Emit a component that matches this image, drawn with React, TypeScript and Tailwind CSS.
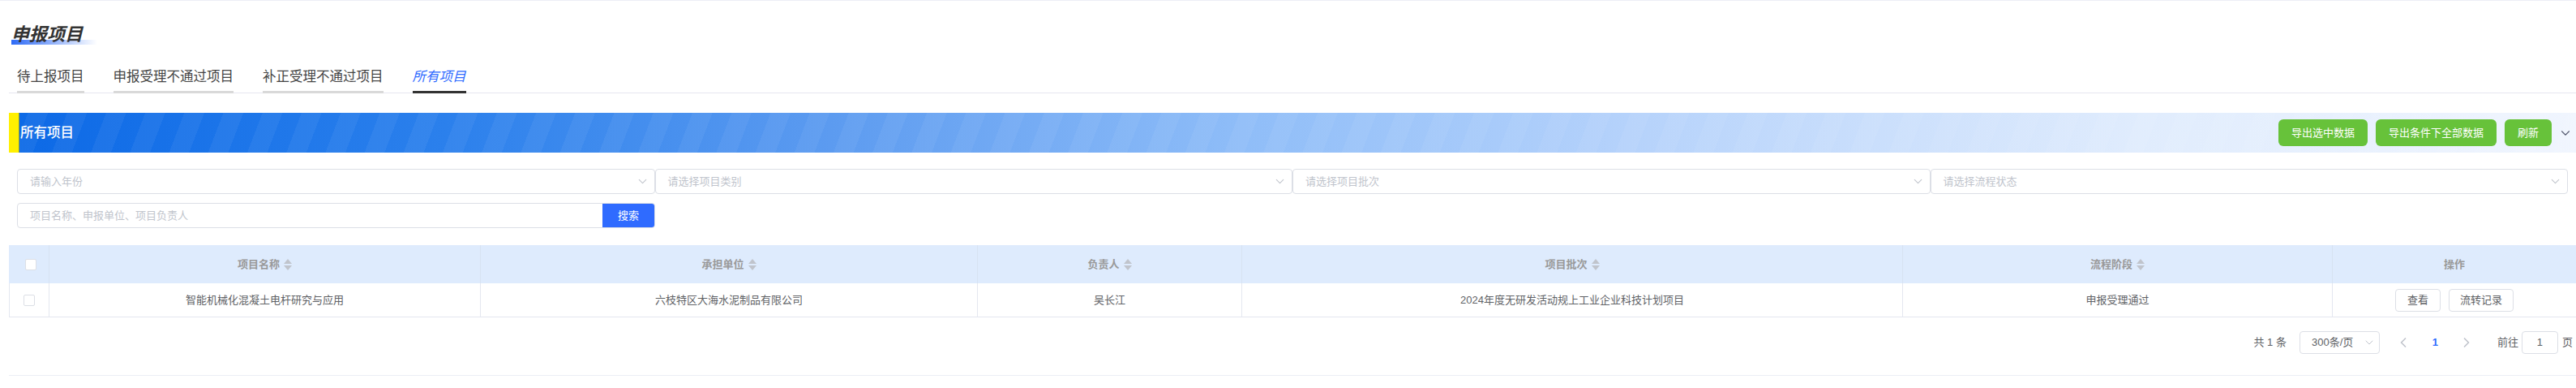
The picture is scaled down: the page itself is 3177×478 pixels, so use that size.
import { ChevronDown, ChevronLeft, ChevronRight } from "lucide-react";

const tabs = ["待上报项目", "申报受理不通过项目", "补正受理不通过项目", "所有项目"];
const filters = ["请输入年份", "请选择项目类别", "请选择项目批次", "请选择流程状态"];

const columns = [
  { title: "项目名称", width: "w-[532px]" },
  { title: "承担单位", width: "w-[613px]" },
  { title: "负责人", width: "w-[326px]" },
  { title: "项目批次", width: "w-[815px]" },
  { title: "流程阶段", width: "w-[530px]" },
];

const row = [
  "智能机械化混凝土电杆研究与应用",
  "六枝特区大海水泥制品有限公司",
  "吴长江",
  "2024年度无研发活动规上工业企业科技计划项目",
  "申报受理通过",
];

function SortCaret() {
  return (
    <svg width="10" height="14" viewBox="0 0 10 14" className="ml-[5px] inline-block align-[-3px]">
      <path d="M5 0 L10 6 L0 6 Z" fill="#c0c4cc" />
      <path d="M5 14 L10 8 L0 8 Z" fill="#c0c4cc" />
    </svg>
  );
}

function Checkbox({ className }: { className: string }) {
  return <span className={`block w-[14px] h-[14px] bg-white border border-[#dcdfe6] rounded-[2px] ${className}`} />;
}

export default function App() {
  return (
    <div className="w-[3177px] h-[478px] bg-white overflow-hidden border-t border-[#eceef6] pl-[11px] font-['Liberation_Sans','Noto_Sans_CJK_SC',sans-serif]">
      {/* Page title */}
      <div className="relative w-[106px] h-[24px] ml-[3px] mt-[30px]">
        <div className="absolute left-0 bottom-0 w-[106px] h-[6px] bg-gradient-to-r from-[#2e6bf6] to-transparent" />
        <h1 className="relative text-[22px] leading-[24px] font-bold italic text-[#333333]">申报项目</h1>
      </div>

      {/* Tabs */}
      <div className="flex gap-[36px] pl-[10px] mt-[28px] border-b border-[#e6e6f0] h-[32px]">
        {tabs.map((tab, i) => (
          <div
            key={tab}
            className={
              i === 3
                ? "h-[32px] border-b-[3px] border-[#333333] text-[16.5px] leading-[22px] italic text-[#2f6bff]"
                : "h-[32px] border-b-[3px] border-[#d9d9d9] text-[16.5px] leading-[22px] text-[#444444]"
            }
          >
            {tab}
          </div>
        ))}
      </div>

      {/* Banner */}
      <div className="flex items-center h-[49px] mt-[24px] [background:repeating-linear-gradient(111deg,rgba(255,255,255,0)_0,rgba(255,255,255,0)_22px,rgba(255,255,255,0.05)_22px,rgba(255,255,255,0.05)_45px),linear-gradient(90deg,#0c69e6_0%,#2b80ec_17%,#5c9bf0_32%,#8fbdf8_48%,#b5d2fb_63%,#e0ecfd_83%,#f0f5fe_100%)]">
        <div className="w-[13px] h-full bg-[#fff000] border-r border-[#8a9a40]" />
        <span className="ml-[1px] text-[16.5px] font-medium text-white">所有项目</span>
        <div className="ml-auto flex items-center gap-[10px]">
          <button className="h-[33px] w-[110px] rounded-[6px] bg-[#67c23a] text-[13px] text-white">导出选中数据</button>
          <button className="h-[33px] w-[149px] rounded-[6px] bg-[#67c23a] text-[13px] text-white">导出条件下全部数据</button>
          <button className="h-[33px] w-[58px] rounded-[6px] bg-[#67c23a] text-[13px] text-white">刷新</button>
          <ChevronDown size={18} strokeWidth={1.5} className="-ml-[2px] text-[#555a70]" />
        </div>
        <div className="w-[4px]" />
      </div>

      {/* Filters */}
      <div className="grid grid-cols-4 w-[3146px] ml-[10px] mt-[20px]">
        {filters.map((f) => (
          <div
            key={f}
            className="flex items-center justify-between h-[31px] pl-[15px] pr-[6px] border border-[#dcdfe6] rounded-[4px] text-[13px] text-[#c0c4cc]"
          >
            {f}
            <ChevronDown size={17} strokeWidth={1.5} className="text-[#c0c4cc]" />
          </div>
        ))}
      </div>
      <div className="flex items-center w-[787px] h-[31px] ml-[10px] mt-[11px] border border-[#dcdfe6] rounded-[4px] overflow-hidden">
        <span className="flex-1 pl-[15px] text-[13px] text-[#c0c4cc]">项目名称、申报单位、项目负责人</span>
        <button className="w-[64px] h-full bg-[#2f6bff] text-[13px] text-white">搜索</button>
      </div>

      {/* Table */}
      <table className="table-fixed w-[3166px] mt-[21px] border-separate border-spacing-0 text-[13px]">
        <colgroup>
          <col className="w-[50px]" />
          {columns.map((c) => (
            <col key={c.title} className={c.width} />
          ))}
          <col className="w-[300px]" />
        </colgroup>
        <thead>
          <tr className="h-[47px] bg-[#deebfd] text-[#999999]">
            <th className="border-r border-[#d7e2f2] p-0">
              <Checkbox className="ml-[20px]" />
            </th>
            {columns.map((c) => (
              <th key={c.title} className="border-r border-[#d7e2f2] p-0 font-bold">
                {c.title}
                <SortCaret />
              </th>
            ))}
            <th className="p-0 font-bold">操作</th>
          </tr>
        </thead>
        <tbody>
          <tr className="h-[42px] text-[#606266]">
            <td className="border-l border-b border-r border-[#e4e7f0] p-0">
              <Checkbox className="ml-[17px]" />
            </td>
            {row.map((text) => (
              <td key={text} className="border-b border-r border-[#e4e7f0] p-0 text-center">
                {text}
              </td>
            ))}
            <td className="border-b border-[#e4e7f0] p-0">
              <div className="flex justify-center gap-[10px]">
                <button className="w-[56px] h-[28px] border border-[#dcdfe6] rounded-[4px] text-[#606266]">查看</button>
                <button className="w-[80px] h-[28px] border border-[#dcdfe6] rounded-[4px] text-[#606266]">流转记录</button>
              </div>
            </td>
          </tr>
        </tbody>
      </table>

      {/* Pagination */}
      <div className="flex items-center justify-end h-[72px] pb-[9px] pr-[4px] border-b border-[#ebeef5] text-[13px] text-[#606266]">
        <span>共 1 条</span>
        <div className="flex items-center justify-between w-[99px] h-[28px] ml-[16px] pl-[14px] pr-[4px] border border-[#dcdfe6] rounded-[4px]">
          300条/页
          <ChevronDown size={16} strokeWidth={1.5} className="text-[#c0c4cc]" />
        </div>
        <div className="flex items-center ml-[10px] font-bold">
          <span className="flex justify-center w-[39px]">
            <ChevronLeft size={20} strokeWidth={2} className="text-[#c0c4cc]" />
          </span>
          <span className="w-[39px] text-center text-[#2f6bff]">1</span>
          <span className="flex justify-center w-[39px]">
            <ChevronRight size={20} strokeWidth={2} className="text-[#c0c4cc]" />
          </span>
        </div>
        <span className="ml-[18px]">前往</span>
        <span className="flex items-center justify-center w-[45px] h-[28px] ml-[4px] mr-[5px] border border-[#dcdfe6] rounded-[4px]">1</span>
        <span>页</span>
      </div>
    </div>
  );
}
